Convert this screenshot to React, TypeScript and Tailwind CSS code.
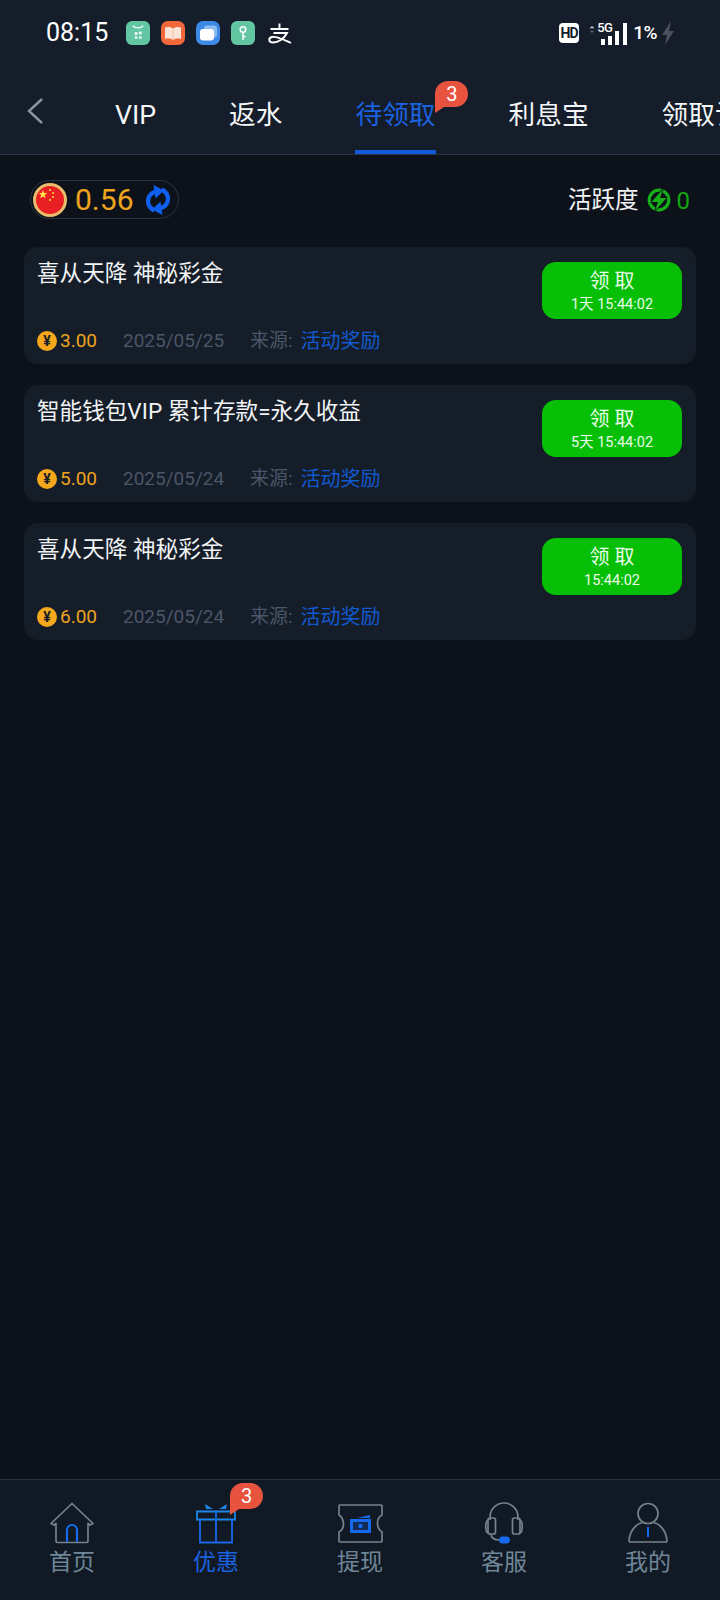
import type { ReactNode } from 'react'

const FONT = "font-['Roboto','Noto_Sans_CJK_SC',sans-serif]"

function Badge({ className }: { className: string }) {
  return (
    <span className={`absolute h-[32px] w-[33px] ${className}`}>
      <svg viewBox="0 0 33 32" className="absolute inset-0 h-full w-full">
        <path d="M13 0h7a13 13 0 0 1 0 26H9L0 32V13A13 13 0 0 1 13 0z" fill="#e8533f" />
      </svg>
      <span className="absolute left-0 top-0 flex h-[26px] w-full items-center justify-center text-[20px] leading-none text-white">3</span>
    </span>
  )
}

function StatusIcons() {
  return (
    <div className="ml-[18px] flex items-center gap-[11px]">
      <svg viewBox="0 0 24 24" className="h-[24px] w-[24px]">
        <rect width="24" height="24" rx="6" fill="#62c6a3" />
        <path d="M7 4.500c1 3 9 3 10 0" fill="none" stroke="#e9f8f2" strokeWidth="1.400" />
        <rect x="8.600" y="11" width="3" height="3" rx="1" fill="#e9f8f2" />
        <rect x="12.800" y="10.500" width="3" height="3" rx="1" fill="#e9f8f2" />
        <rect x="8.600" y="15" width="3" height="3" rx="1" fill="#cdeee2" />
        <rect x="12.800" y="15" width="3" height="3" rx="1" fill="#cdeee2" />
      </svg>
      <svg viewBox="0 0 24 24" className="h-[24px] w-[24px]">
        <rect width="24" height="24" rx="7" fill="#f2683a" />
        <path d="M4 6.500c3-1 6-.7 8 1 2-1.700 5-2 8-1v11.500c-3-.8-6-.5-8 1-2-1.500-5-1.800-8-1z" fill="#fbe3d6" />
        <path d="M12 7.500V19" stroke="#f0b79c" strokeWidth="0.800" />
      </svg>
      <svg viewBox="0 0 24 24" className="h-[24px] w-[24px]">
        <rect width="24" height="24" rx="7" fill="#3d8ae6" />
        <rect x="8" y="4.500" width="13" height="12" rx="3" fill="#8fbcf2" />
        <rect x="4" y="8" width="14" height="11.500" rx="3" fill="#ffffff" />
      </svg>
      <svg viewBox="0 0 24 24" className="h-[24px] w-[24px]">
        <rect width="24" height="24" rx="6" fill="#62c6a3" />
        <circle cx="12" cy="8.500" r="2.800" fill="none" stroke="#ffffff" strokeWidth="1.500" />
        <path d="M12 11.500V19M12 15.500h2.500" stroke="#ffffff" strokeWidth="1.500" fill="none" />
      </svg>
      <svg viewBox="0 0 24 24" className="ml-[2px] h-[24px] w-[24px]">
        <path d="M2.500 8h18M11.500 2.500V8M5.500 12h13.500c-3 6-9 9.500-14 9.500-4.500 0-5-4.500-1-5.500 5-1 12 3 19 6" fill="none" stroke="#ffffff" strokeWidth="1.900" />
      </svg>
    </div>
  )
}

function SignalIcons() {
  return (
    <div className="ml-auto mr-[45px] flex items-center">
      <span className="flex h-[20px] w-[20px] items-center justify-center rounded-[4px] bg-white text-[14px] font-bold leading-none tracking-[-0.8px] text-[#151d2a]">HD</span>
      <svg viewBox="0 0 10 12" className="mb-[7px] ml-[10px] h-[11px] w-[6px]">
        <path d="M5 0l4 4H1z" fill="#c8ccd2" />
        <path d="M5 12L1 8h8z" fill="#5b6370" />
      </svg>
      <div className="relative ml-[2px] h-[24px] w-[30px]">
        <span className="absolute left-0 top-0 text-[13px] font-medium leading-[14px] tracking-[-0.5px] text-white">5G</span>
        <svg viewBox="0 0 30 24" className="absolute inset-0 h-full w-full">
          <rect x="4" y="18" width="4" height="6" fill="#ffffff" />
          <rect x="11" y="15" width="4" height="9" fill="#ffffff" />
          <rect x="18" y="10" width="4" height="14" fill="#ffffff" />
          <rect x="26" y="2" width="4" height="22" fill="#ffffff" />
        </svg>
      </div>
      <span className="ml-[6px] text-[19px] font-medium leading-none tracking-[-0.5px] text-white">1%</span>
      <svg viewBox="0 0 14 24" className="ml-[4px] h-[24px] w-[14px]">
        <path d="M10 0L1 14h5l-2 10 9-14H8z" fill="#4a515c" />
      </svg>
    </div>
  )
}

function Tab({ label, active, children }: { label: string; active?: boolean; children?: ReactNode }) {
  return (
    <div className={`relative flex h-[66px] shrink-0 items-start whitespace-nowrap pt-[8px] text-[26.7px] leading-[38px] ${active ? 'border-b-[4px] border-[#1259dc] text-[#1a62e0]' : 'text-[#f4f6f8]'}`}>
      {label}
      {children}
    </div>
  )
}

function Coin() {
  return (
    <span className="flex h-[20px] w-[20px] shrink-0 items-center justify-center rounded-full bg-[#f5a81c] text-[14px] font-bold leading-none text-[#151d28]">¥</span>
  )
}

function RewardCard({ title, amount, date, timer }: { title: string; amount: string; date: string; timer: string }) {
  return (
    <div className="flex h-[117px] flex-col justify-between rounded-[14px] bg-[#151d28] pb-[11px] pl-[13px] pr-[14px] pt-[15px]">
      <div className="flex items-start justify-between">
        <div className="-mt-[1px] text-[22.6px] leading-[26px] text-[#f1f3f5]">{title}</div>
        <button className="flex h-[57px] w-[140px] flex-col items-center justify-center rounded-[14px] bg-[#06bf06] pt-[2px] text-white">
          <span className="text-[20px] leading-[26px] text-[#e9fbe9]">领 取</span>
          <span className="mt-[1px] text-[14.5px] leading-[20px] text-[#e9fbe9]">{timer}</span>
        </button>
      </div>
      <div className="-mt-[7px] flex items-center text-[19px] leading-[24px]">
        <Coin />
        <span className="ml-[3px] w-[63px] text-[#eea41f]">{amount}</span>
        <span className="w-[127px] text-[#4a5669]">{date}</span>
        <span className="text-[#4a5669]">来源:</span>
        <span className="ml-[8px] text-[20px] text-[#1259d0]">活动奖励</span>
      </div>
    </div>
  )
}

function NavItem({ label, active, icon, children }: { label: string; active?: boolean; icon: ReactNode; children?: ReactNode }) {
  return (
    <div className="relative flex w-[144px] flex-col items-center">
      <div className="h-[42px] w-[46px]">{icon}</div>
      <span className={`mt-[4px] text-[23px] leading-[30px] ${active ? 'text-[#1a62e0]' : 'text-[#6f8698]'}`}>{label}</span>
      {children}
    </div>
  )
}

const GRAY = '#75818f'
const BLUE = '#1569ec'

const HomeIcon = (
  <svg viewBox="0 0 46 42" className="h-full w-full" fill="none" strokeWidth="1.700">
    <path d="M2 21.500L23 1.500l21 20-3 1.500-2-1.500V39a1.500 1.500 0 0 1-1.500 1.500h-29A1.500 1.500 0 0 1 7 39V21.500L5 23z" stroke={GRAY} strokeLinejoin="round" />
    <path d="M18 40V28a5 5 0 0 1 10 0v12" stroke={BLUE} strokeWidth="2.200" />
  </svg>
)

const GiftIcon = (
  <svg viewBox="0 0 46 42" className="h-full w-full" fill="none" strokeWidth="1.800">
    <path d="M4 9.500h38v8H4z" stroke="#1d86e8" />
    <path d="M7 17.500v23h32v-23M23 9.500v31" stroke={BLUE} />
    <path d="M12 2l8 5h-7zM34 2l-8 5h7z" fill="#1d86e8" />
  </svg>
)

const TicketIcon = (
  <svg viewBox="0 0 46 42" className="h-full w-full" fill="none">
    <path d="M2 3h42a1 1 0 0 1 1 1v9c-6 3-6 13 0 17v9a1 1 0 0 1-1 1H3a1 1 0 0 1-1-1v-9c6-3 6-13 0-17V4a1 1 0 0 1 1-1z" stroke={GRAY} strokeWidth="1.700" />
    <path d="M13 17h21v14H13zM20 16l13-3v3z" fill={BLUE} />
    <rect x="16" y="20" width="15" height="8" fill="#132a55" />
    <circle cx="23.500" cy="24" r="2.200" fill={BLUE} />
  </svg>
)

const HeadsetIcon = (
  <svg viewBox="0 0 46 42" className="h-full w-full" fill="none" stroke={GRAY} strokeWidth="1.700">
    <path d="M9 18v-3a14 14 0 0 1 28 0v3" />
    <rect x="7" y="16" width="7.500" height="16" rx="2" />
    <rect x="31.500" y="16" width="7.500" height="16" rx="2" />
    <path d="M7 18c-3 1-3 12 0 13M39 18c3 1 3 12 0 13M10 32c0 4 3 6 9 6" />
    <rect x="18" y="34.500" width="11" height="7" rx="3.500" fill={BLUE} stroke="none" />
  </svg>
)

const UserIcon = (
  <svg viewBox="0 0 46 42" className="h-full w-full" fill="none" stroke={GRAY} strokeWidth="1.700">
    <circle cx="23" cy="11.500" r="10" />
    <path d="M4 40c0-11 8-19 13-19M42 40c0-11-8-19-13-19M4 40h38" />
    <path d="M23 25v10" stroke={BLUE} strokeWidth="2" />
  </svg>
)

export default function App() {
  return (
    <div className={`flex min-h-[1600px] w-[720px] flex-col overflow-hidden bg-[#0d121a] ${FONT}`}>
      {/* header */}
      <header className="h-[155px] border-b border-[#2a3442] bg-[#151d2a]">
        <div className="flex h-[64px] items-center pl-[46px] pt-[1px]">
          <span className="text-[25px] leading-none text-white">08:15</span>
          <StatusIcons />
          <SignalIcons />
        </div>
        <div className="flex h-[90px] overflow-hidden pl-[27px] pt-[24px]">
          <svg viewBox="0 0 16 26" className="mt-[10px] h-[26px] w-[16px] shrink-0" fill="none" stroke="#8b95a3" strokeWidth="2.400">
            <path d="M15 1L2 13l13 12" />
          </svg>
          <div className="ml-[72px] flex gap-[73px]">
            <Tab label="VIP" />
            <Tab label="返水" />
            <Tab label="待领取" active>
              <Badge className="left-[80px] -top-[7px]" />
            </Tab>
            <Tab label="利息宝" />
            <Tab label="领取记录" />
          </div>
        </div>
      </header>

      {/* balance */}
      <div className="flex h-[89px] items-center justify-between pl-[30px] pr-[30px]">
        <div className="flex h-[39px] w-[149px] items-center rounded-full border border-[#2a3442] pl-[2px]">
          <svg viewBox="0 0 34 34" className="h-[34px] w-[34px] shrink-0">
            <circle cx="17" cy="17" r="15.500" fill="#e81f23" stroke="#eabd6c" strokeWidth="3" />
            <path d="M10 7l1.100 3 3.200.1-2.500 2 .9 3.100-2.700-1.800-2.700 1.800.9-3.100-2.500-2 3.200-.1z" fill="#fde047" />
            <circle cx="17" cy="7" r="1" fill="#fde047" />
            <circle cx="20" cy="10" r="1" fill="#fde047" />
            <circle cx="20" cy="14" r="1" fill="#fde047" />
            <circle cx="17" cy="17" r="1" fill="#fde047" />
          </svg>
          <span className="ml-[8px] text-[30px] leading-none text-[#eea41f]">0.56</span>
          <svg viewBox="0 0 28 32" className="ml-[10px] h-[32px] w-[28px] shrink-0">
            <g fill="#0f5ff0">
              <path d="M9.500 28.500C4 26 1.500 21 2 16 2.500 11 6 7 10.500 5.800l1 4.200C8.500 11 6.500 13.500 6.200 16.500c-.3 3 1.300 6 4.800 8z" />
              <path d="M9.500 1L20 6.500l-8.500 8z" />
              <path d="M18.500 3.500C24 6 26.500 11 26 16c-.5 5-4 9-8.500 10.200l-1-4.200c3-1 5-3.500 5.300-6.500.3-3-1.300-6-4.800-8z" />
              <path d="M18.500 31L8 25.500l8.500-8z" />
            </g>
          </svg>
        </div>
        <div className="flex items-center">
          <span className="mt-[3px] text-[23.5px] leading-none text-[#f1f3f5]">活跃度</span>
          <svg viewBox="0 0 24 24" className="ml-[8px] h-[24px] w-[24px]">
            <circle cx="12" cy="12" r="9.800" fill="none" stroke="#15b015" strokeWidth="3.200" />
            <path d="M16 1L4.500 14h6.500L8 23l11.500-13H13z" fill="#15b015" stroke="#0d121a" strokeWidth="1.400" paintOrder="stroke" />
          </svg>
          <span className="ml-[6px] mt-[2px] text-[24px] leading-none text-[#12a812]">0</span>
        </div>
      </div>

      {/* list */}
      <div className="mt-[3px] flex flex-col gap-[21px] px-[24px]">
        <RewardCard title="喜从天降 神秘彩金" amount="3.00" date="2025/05/25" timer="1天 15:44:02" />
        <RewardCard title="智能钱包VIP 累计存款=永久收益" amount="5.00" date="2025/05/24" timer="5天 15:44:02" />
        <RewardCard title="喜从天降 神秘彩金" amount="6.00" date="2025/05/24" timer="15:44:02" />
      </div>

      {/* bottom nav */}
      <nav className="mt-auto flex h-[121px] border-t border-[#2a3442] bg-[#111a24] pt-[22px]">
        <NavItem label="首页" icon={HomeIcon} />
        <NavItem label="优惠" active icon={GiftIcon}>
          <Badge className="left-[86px] -top-[19px]" />
        </NavItem>
        <NavItem label="提现" icon={TicketIcon} />
        <NavItem label="客服" icon={HeadsetIcon} />
        <NavItem label="我的" icon={UserIcon} />
      </nav>
    </div>
  )
}
